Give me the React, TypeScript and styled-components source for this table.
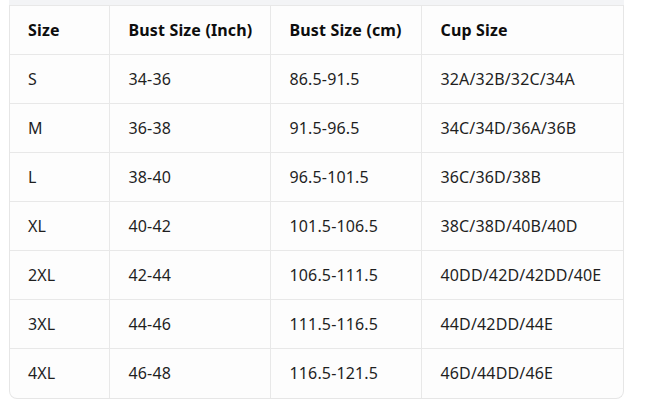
import React from "react";
import styled, { createGlobalStyle } from "styled-components";

const Global = createGlobalStyle`
  html, body { margin: 0; padding: 0; background: #ffffff; }
  body { font-family: "Noto Sans", "Open Sans", sans-serif; }
`;

const Page = styled.div`
  padding: 0 21px 0 9px;
  width: 645px;
  box-sizing: border-box;
`;

const Card = styled.div`
  border: 1px solid #e6e6e6;
  border-top: none;
  border-radius: 0 0 8px 8px;
  overflow: hidden;
  background: #fdfdfd;
`;

const TopStrip = styled.div`
  height: 5px;
  background: #f3f4f6;
`;

const Table = styled.table`
  width: 100%;
  border-collapse: collapse;
  table-layout: fixed;
  font-size: 16px;
  letter-spacing: 0.15px;
  color: #1a1a1a;
`;

const Cell = styled.td<{ $head?: boolean }>`
  height: 49px;
  padding: 0 0 0 19px;
  box-sizing: border-box;
  border-top: 1px solid #e8e8e8;
  border-left: 1px solid #e8e8e8;
  font-weight: ${(p) => (p.$head ? 700 : 400)};
  color: ${(p) => (p.$head ? "#0d0d0d" : "#1f1f1f")};
  white-space: nowrap;
  &:first-child { border-left: none; padding-left: 18px; }
`;

const Row = styled.tr`
  &:first-child td { border-top: 1px solid #e8e8e8; }
`;

const headers = ["Size", "Bust Size (Inch)", "Bust Size (cm)", "Cup Size"];
const rows = [
  ["S", "34-36", "86.5-91.5", "32A/32B/32C/34A"],
  ["M", "36-38", "91.5-96.5", "34C/34D/36A/36B"],
  ["L", "38-40", "96.5-101.5", "36C/36D/38B"],
  ["XL", "40-42", "101.5-106.5", "38C/38D/40B/40D"],
  ["2XL", "42-44", "106.5-111.5", "40DD/42D/42DD/40E"],
  ["3XL", "44-46", "111.5-116.5", "44D/42DD/44E"],
  ["4XL", "46-48", "116.5-121.5", "46D/44DD/46E"],
];

const widths = [99, 161, 151, 202];

export default function App() {
  return (
    <Page>
      <Global />
      <TopStrip />
      <Card>
        <Table>
          <colgroup>
            {widths.map((w, i) => (
              <col key={i} style={{ width: w }} />
            ))}
          </colgroup>
          <tbody>
            <Row>
              {headers.map((h) => (
                <Cell key={h} $head>
                  {h}
                </Cell>
              ))}
            </Row>
            {rows.map((r) => (
              <Row key={r[0]}>
                {r.map((c, i) => (
                  <Cell key={i}>{c}</Cell>
                ))}
              </Row>
            ))}
          </tbody>
        </Table>
      </Card>
    </Page>
  );
}
